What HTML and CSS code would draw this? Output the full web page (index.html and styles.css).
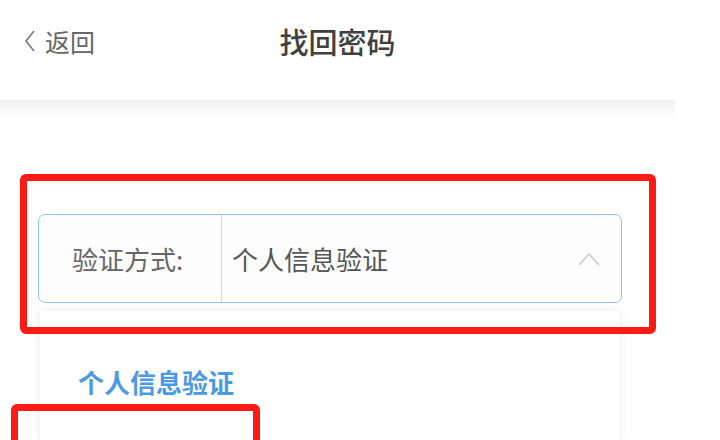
FILE: index.html
```html
<!DOCTYPE html>
<html>
  <head>
    <title>找回密码</title>
    <meta charset="UTF-8" />
    <link rel="stylesheet" href="styles.css">
  </head>
  <body>
    <div class="screen">
      <div class="header">
        <div class="back">
          <svg class="back-icon" width="12" height="24" viewBox="0 0 12 24">
            <polyline points="10,2 2,12 10,22" fill="none" stroke="#777" stroke-width="1.6" />
          </svg>
          <span>返回</span>
        </div>
        <h1 class="title">找回密码</h1>
        <div></div>
      </div>

      <div class="form">
        <div class="select-box">
          <div class="select-label">验证方式:</div>
          <div class="select-value">
            <span>个人信息验证</span>
            <svg class="arrow" width="22" height="14" viewBox="0 0 22 14">
              <polyline points="1,13 11,2 21,13" fill="none" stroke="#c9c9c9" stroke-width="1.5" />
            </svg>
          </div>
        </div>

        <div class="dropdown">
          <div class="option active">个人信息验证</div>
        </div>
      </div>

      <!-- annotation frames -->
      <div class="mark mark-select"></div>
      <div class="mark mark-option"></div>
    </div>
  </body>
</html>
```

FILE: styles.css
```css
body {
  margin: 0;
  background: #fff;
  font-family: "Noto Sans CJK SC", "Noto Sans", sans-serif;
}

.screen {
  position: relative;
  width: 675px;
  height: 440px;
  overflow: hidden;
}

.header {
  display: grid;
  grid-template-columns: 1fr auto 1fr;
  align-items: center;
  height: 82px;
  padding-bottom: 18px;
  position: relative;
}

.header::after {
  content: "";
  position: absolute;
  left: 0;
  right: 0;
  top: 100px;
  height: 20px;
  background: linear-gradient(#f1f1f1, rgba(255, 255, 255, 0));
}

.back {
  display: flex;
  align-items: center;
  gap: 9px;
  padding-left: 24px;
  font-size: 25px;
  color: #666;
}

.title {
  margin: 0;
  font-size: 29px;
  font-weight: 500;
  color: #404040;
}

.form {
  padding-top: 114px;
}

.select-box {
  display: flex;
  margin-left: 38px;
  width: 584px;
  height: 89px;
  box-sizing: border-box;
  border: 1.5px solid #92c1ea;
  border-radius: 7px;
  background: #fdfdfd;
}

.select-label {
  display: flex;
  align-items: center;
  width: 183px;
  padding-left: 33px;
  box-sizing: border-box;
  border-right: 1px solid #d6d6d6;
  font-size: 26px;
  color: #666;
}

.select-value {
  flex: 1;
  display: flex;
  align-items: center;
  justify-content: space-between;
  padding: 0 21px 0 10px;
  font-size: 26px;
  color: #555;
}

.dropdown {
  margin: 8px 0 0 40px;
  width: 580px;
  height: 129px;
  background: #fff;
  box-shadow: 0 0 9px rgba(0, 0, 0, 0.1);
}

.option {
  padding: 53px 38px 0;
  font-size: 26px;
  line-height: 36px;
}

.option.active {
  color: #4a9ae2;
  font-weight: 700;
}

.mark {
  position: absolute;
  border: 7px solid #fb1b14;
  border-radius: 6px;
  box-sizing: border-box;
}

.mark-select {
  left: 20px;
  top: 174px;
  width: 636px;
  height: 160px;
}

.mark-option {
  left: 11px;
  top: 404px;
  width: 249px;
  height: 80px;
}
```
